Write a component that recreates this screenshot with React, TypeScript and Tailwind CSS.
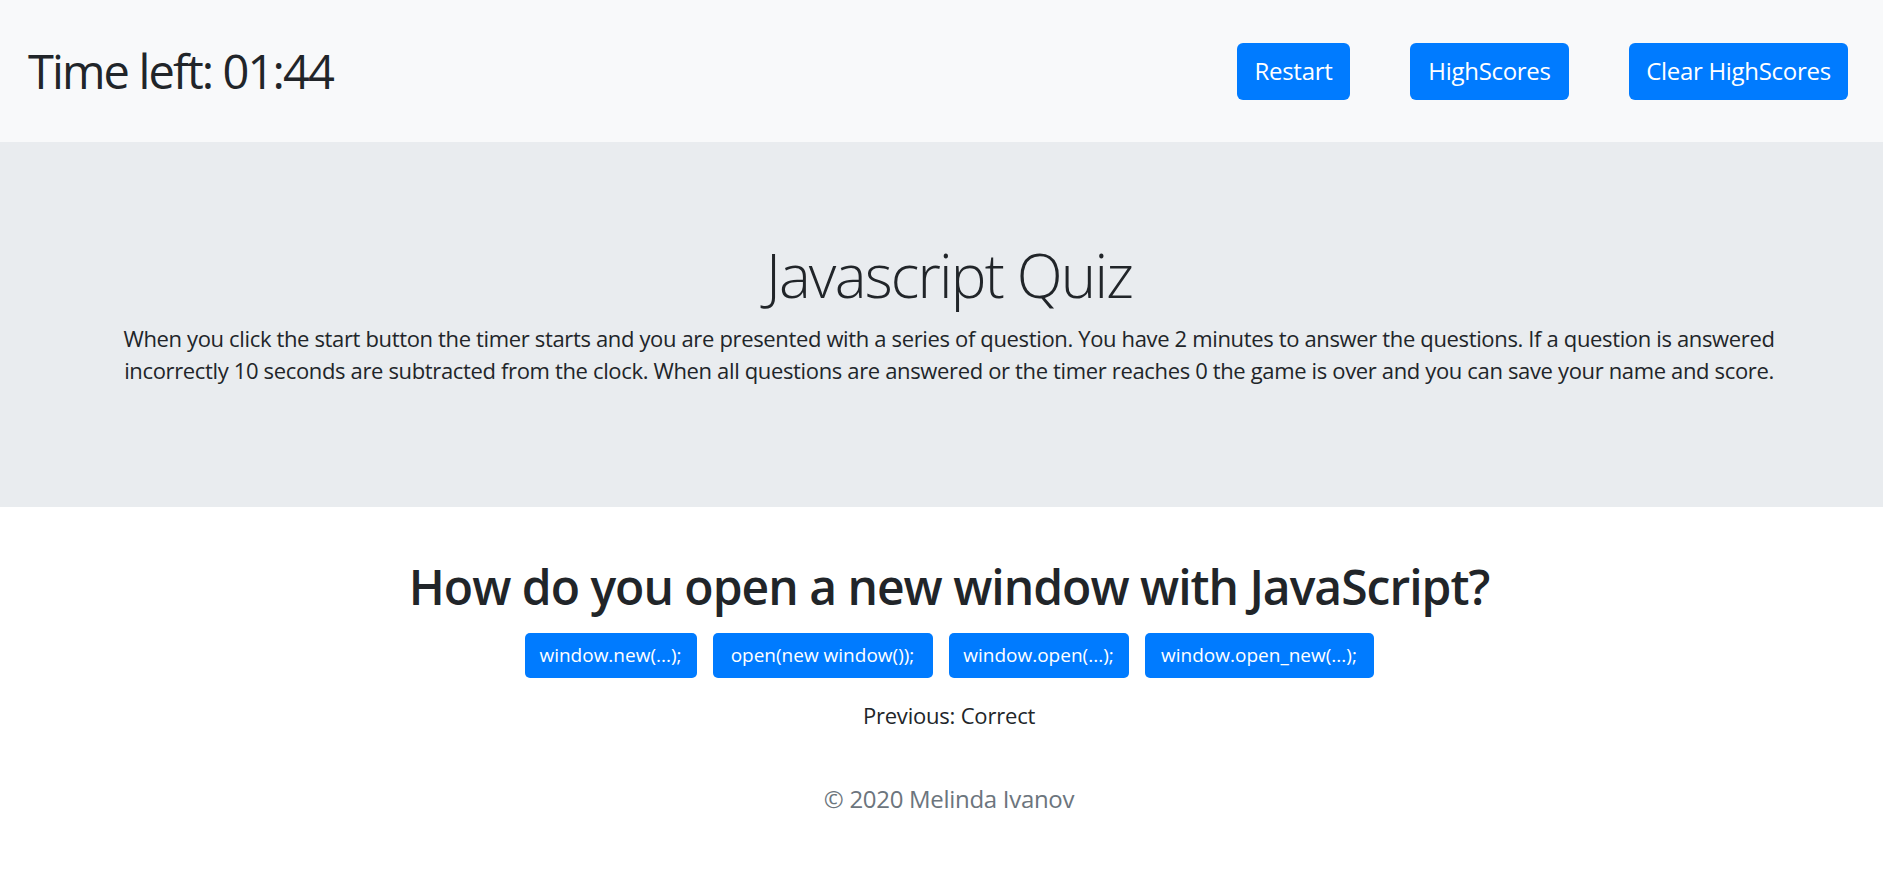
import React, { useState } from 'react';

const answers = ['window.new(...);', 'open(new window());', 'window.open(...);', 'window.open_new(...);'];
const answerWidths = ['w-[172px]', 'w-[220px]', 'w-[180px]', 'w-[229px]'];

const App = () => {
  const [previous, setPrevious] = useState('Correct');

  return (
    <div className="min-h-screen bg-white text-[#212529] font-['Open_Sans',sans-serif]">
      {/* navbar */}
      <nav className="flex items-center justify-between h-[142px] bg-[#f8f9fa] pl-[28px] pr-[35px]">
        <div className="text-[47px] leading-[58px] tracking-[-0.04em]">Time left: 01:44</div>
        <div className="flex items-center gap-[60px]">
          <button className="w-[113px] h-[57px] rounded-[6px] bg-[#007bff] text-white text-[24px] tracking-[-0.3px]">Restart</button>
          <button className="w-[159px] h-[57px] rounded-[6px] bg-[#007bff] text-white text-[24px] tracking-[-0.3px]">HighScores</button>
          <button className="w-[219px] h-[57px] rounded-[6px] bg-[#007bff] text-white text-[24px] tracking-[-0.3px]">Clear HighScores</button>
        </div>
      </nav>

      {/* jumbotron */}
      <div className="h-[365px] bg-[#e9ecef] pt-[97px] pl-[15px] text-center">
        <h1 className="text-[60px] font-light leading-[72px] mb-[11px] tracking-[-0.03em]">Javascript Quiz</h1>
        <p className="text-[22px] leading-[32px] tracking-[-0.35px]">
          When you click the start button the timer starts and you are presented with a series of question. You have 2 minutes to answer the questions. If a question is answered
          <br />
          incorrectly 10 seconds are subtracted from the clock. When all questions are answered or the timer reaches 0 the game is over and you can save your name and score.
        </p>
      </div>

      {/* question */}
      <div className="pl-[15px] pt-[50px] flex flex-col items-center">
        <h2 className="text-[48px] font-semibold leading-[60px] tracking-[-1px]">How do you open a new window with JavaScript?</h2>
        <div className="flex gap-[16px] mt-[16px]">
          {answers.map((a, i) => (
            <button
              key={a}
              onClick={() => setPrevious(i === 2 ? 'Correct' : 'Wrong')}
              className={`${answerWidths[i]} h-[45px] rounded-[5px] bg-[#007bff] text-white text-[19px]`}
            >
              {a}
            </button>
          ))}
        </div>
        <p className="mt-[21px] text-[22px] leading-[33px] tracking-[-0.2px]">Previous: {previous}</p>
        <footer className="mt-[49px] text-[24px] leading-[36px] tracking-[-0.3px] text-[#6c757d]">© 2020 Melinda Ivanov</footer>
      </div>
    </div>
  );
};

export default App;
